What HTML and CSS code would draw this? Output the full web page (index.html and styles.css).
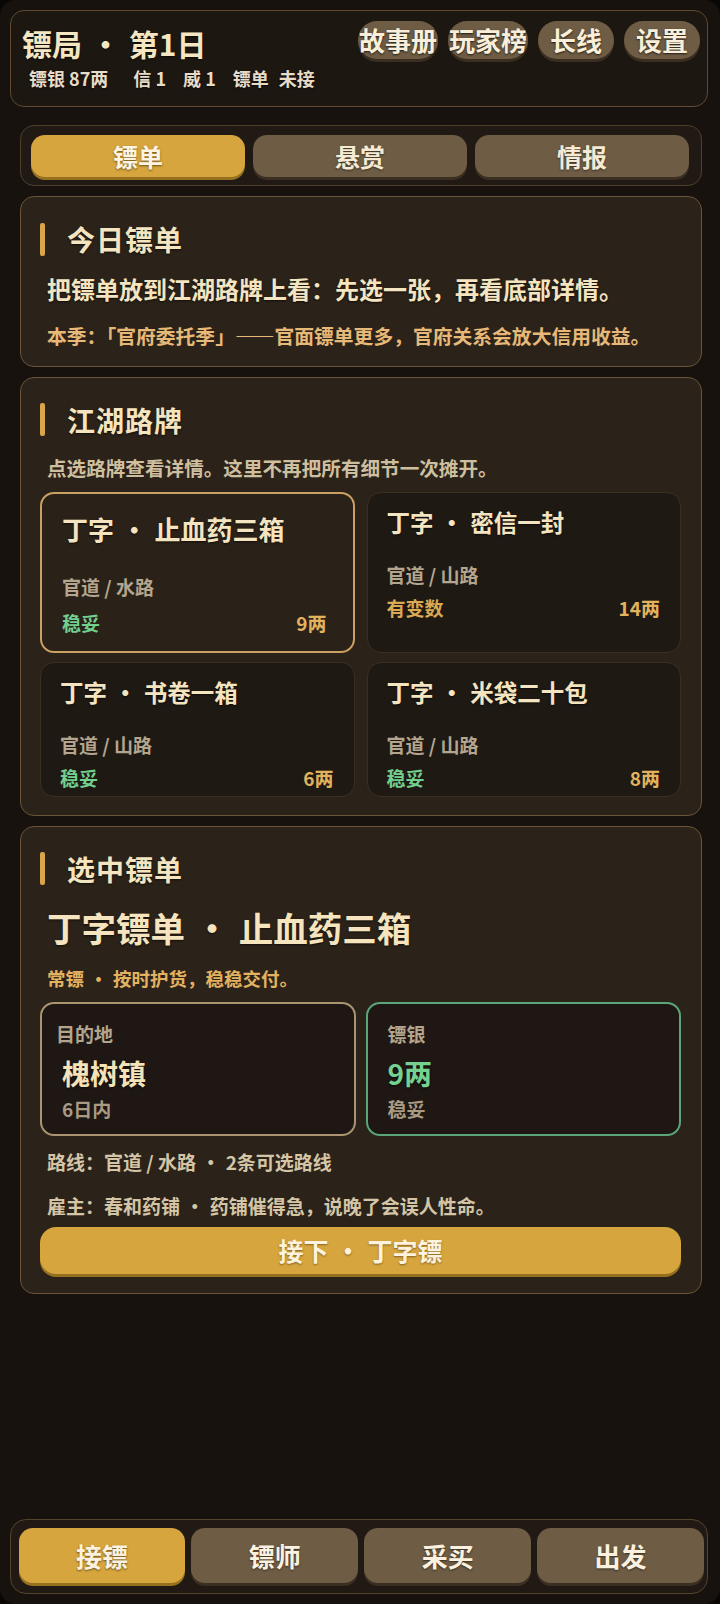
FILE: index.html
```html
<!DOCTYPE html>
<html lang="zh-CN">
<head>
<meta charset="utf-8">
<title>镖局</title>
<link rel="stylesheet" href="styles.css">
</head>
<body>
<div class="shell">
  <header class="header">
    <div class="head-left">
      <div class="head-title">镖局<span class="dot">·</span>第1日</div>
      <div class="stats">
        <span class="first">镖银 87两</span>
        <span>信 1</span>
        <span>威 1</span>
        <span class="last">镖单 未接</span>
      </div>
    </div>
    <div class="pills">
      <div class="pill wide">故事册</div>
      <div class="pill wide">玩家榜</div>
      <div class="pill">长线</div>
      <div class="pill">设置</div>
    </div>
  </header>

  <main class="main">
    <nav class="tabs">
      <div class="tab active">镖单</div>
      <div class="tab">悬赏</div>
      <div class="tab">情报</div>
    </nav>

    <section class="card card-today">
      <h2 class="sec-title">今日镖单</h2>
      <p class="lead">把镖单放到江湖路牌上看：先选一张，再看底部详情。</p>
      <p class="season">本季：「官府委托季」——官面镖单更多，官府关系会放大信用收益。</p>
    </section>

    <section class="card">
      <h2 class="sec-title">江湖路牌</h2>
      <p class="hint">点选路牌查看详情。这里不再把所有细节一次摊开。</p>
      <div class="signs">
        <div class="sign selected">
          <div class="sign-title">丁字<span class="dot">·</span>止血药三箱</div>
          <div class="sign-route">官道 / 水路</div>
          <div class="sign-foot"><span class="safe">稳妥</span><span class="price">9两</span></div>
        </div>
        <div class="sign">
          <div class="sign-title">丁字<span class="dot">·</span>密信一封</div>
          <div class="sign-route">官道 / 山路</div>
          <div class="sign-foot"><span class="risky">有变数</span><span class="price">14两</span></div>
        </div>
        <div class="sign">
          <div class="sign-title">丁字<span class="dot">·</span>书卷一箱</div>
          <div class="sign-route">官道 / 山路</div>
          <div class="sign-foot"><span class="safe">稳妥</span><span class="price">6两</span></div>
        </div>
        <div class="sign">
          <div class="sign-title">丁字<span class="dot">·</span>米袋二十包</div>
          <div class="sign-route">官道 / 山路</div>
          <div class="sign-foot"><span class="safe">稳妥</span><span class="price">8两</span></div>
        </div>
      </div>
    </section>

    <section class="card card-detail">
      <h2 class="sec-title">选中镖单</h2>
      <div class="big-title">丁字镖单<span class="dot">·</span>止血药三箱</div>
      <p class="kind">常镖<span class="dot">·</span>按时护货，稳稳交付。</p>
      <div class="boxes">
        <div class="box">
          <div class="box-label shift">目的地</div>
          <div class="box-value">槐树镇</div>
          <div class="box-sub">6日内</div>
        </div>
        <div class="box green">
          <div class="box-label">镖银</div>
          <div class="box-value money">9两</div>
          <div class="box-sub">稳妥</div>
        </div>
      </div>
      <p class="info route">路线：官道 / 水路<span class="dot">·</span>2条可选路线</p>
      <p class="info employer">雇主：春和药铺<span class="dot">·</span>药铺催得急，说晚了会误人性命。</p>
      <div class="accept">接下<span class="dot">·</span>丁字镖</div>
    </section>
  </main>

  <nav class="bottom-nav">
    <div class="nav-btn active">接镖</div>
    <div class="nav-btn">镖师</div>
    <div class="nav-btn">采买</div>
    <div class="nav-btn">出发</div>
  </nav>
</div>
</body>
</html>
```

FILE: styles.css
```css
* { box-sizing: border-box; }
html, body { margin: 0; padding: 0; }
body {
  background: #0a0806;
  font-family: "Noto Sans CJK SC", "Noto Sans", sans-serif;
  font-weight: 700;
  color: #f4e4c0;
}
p, h2 { margin: 0; }

.shell {
  min-height: 100vh;
  background: #17120e;
  border-radius: 16px;
  padding: 10px 12px 10px 10px;
  display: flex;
  flex-direction: column;
}

.dot { margin: 0 0.28em; }

/* header */
.header {
  border: 1.5px solid #5e4b30;
  border-radius: 14px;
  background: #1d1712;
  padding: 10px 7px 17px 11px;
  display: flex;
  justify-content: space-between;
  align-items: flex-start;
}
.head-left { padding-top: 4px; }
.head-title {
  font-size: 30px;
  line-height: 36px;
  color: #f5e6c2;
  text-shadow: 0 1px 2px rgba(0,0,0,.6);
}
.stats {
  margin-top: 6px;
  padding-left: 7px;
  display: flex;
  gap: 17px;
  font-size: 18px;
  line-height: 22px;
  color: #e6dcc8;
  text-shadow: 0 1px 2px rgba(0,0,0,.6);
}
.stats .first { margin-right: 8px; }
.stats .last { word-spacing: 6px; }
.pills { display: flex; gap: 10px; }
.pill {
  height: 38px;
  line-height: 38px;
  border-radius: 19px;
  background: #6e5c44;
  color: #f8eed9;
  font-size: 26px;
  padding: 0 12px;
  white-space: nowrap;
  box-shadow: 0 3px 0 #3a2e20;
  text-shadow: 0 1px 2px rgba(0,0,0,.7);
}
.pill.wide { padding: 0 1px; }

/* main */
.main {
  padding: 18px 6px 0 10px;
  display: flex;
  flex-direction: column;
  gap: 10px;
}

.tabs {
  border: 1.5px solid #4f3f2a;
  border-radius: 14px;
  background: #211a14;
  padding: 8.5px 12px 8.5px 10px;
  display: grid;
  grid-template-columns: 1fr 1fr 1fr;
  gap: 8px;
}
.tab {
  height: 42px;
  line-height: 42px;
  text-align: center;
  border-radius: 14px;
  background: #6e5c45;
  color: #f6ead4;
  font-size: 25px;
  box-shadow: 0 3px 0 #3b2f22;
  text-shadow: 0 1px 2px rgba(0,0,0,.5);
}
.tab.active { background: #d6a53d; box-shadow: 0 3px 0 #94701f; color: #fff4df; }

.card {
  border: 1.5px solid #6a5636;
  border-radius: 14px;
  background: #2b2219;
  padding: 25px 20px 16px 19px;
}
.card-today { padding-bottom: 17.5px; }
.sec-title {
  display: flex;
  align-items: center;
  font-size: 28px;
  line-height: 34px;
  font-weight: 700;
  letter-spacing: 1px;
  color: #f4e4c0;
  text-shadow: 0 1px 2px rgba(0,0,0,.6);
}
.sec-title::before {
  content: "";
  width: 5px;
  height: 33px;
  border-radius: 2px;
  background: #d9a54a;
  margin-right: 22px;
}
.lead {
  margin-top: 19px;
  padding-left: 7px;
  font-size: 24px;
  line-height: 28px;
  color: #f4e4c0;
  text-shadow: 0 1px 2px rgba(0,0,0,.6);
}
.season {
  margin-top: 21px;
  padding-left: 7px;
  font-size: 19.8px;
  line-height: 24px;
  color: #e7b978;
}
.hint {
  margin-top: 19px;
  padding-left: 7px;
  font-size: 19.6px;
  line-height: 24px;
  color: #cdbf9f;
}

.signs {
  margin-top: 12.5px;
  display: grid;
  grid-template-columns: 1fr 1fr;
  gap: 9px 12px;
  padding-bottom: 1.5px;
}
.sign {
  border: 1px solid #3b2f22;
  border-radius: 14px;
  background: #1f1914;
  padding: 14px 20px 6px 19px;
}
.sign-title {
  font-size: 23.5px;
  line-height: 30px;
  min-height: 52px;
  color: #f4e4c0;
  white-space: nowrap;
  text-shadow: 0 1px 2px rgba(0,0,0,.6);
}
.sign-route {
  margin-top: 4px;
  font-size: 19px;
  line-height: 24px;
  color: #b4a68e;
}
.sign-foot {
  margin-top: 9px;
  display: flex;
  justify-content: space-between;
  font-size: 19px;
  line-height: 24px;
}
.safe { color: #72cf8e; }
.risky { color: #d9a955; }
.price { color: #e2b35c; }
.sign.selected {
  border: 2px solid #caa163;
  background: #2a2118;
  padding: 19px 26px 16px 20px;
}
.sign.selected .sign-title { font-size: 26px; line-height: 32px; min-height: 58px; }
.sign.selected .sign-foot { margin-top: 12px; }

.card-detail { padding-bottom: 19px; }
.big-title {
  margin-top: 20px;
  padding-left: 7px;
  font-size: 34.5px;
  line-height: 42px;
  color: #f5e4bd;
  text-shadow: 0 1px 2px rgba(0,0,0,.6);
}
.kind {
  margin-top: 18px;
  padding-left: 7px;
  font-size: 18.5px;
  line-height: 24px;
  color: #e2b261;
}
.boxes {
  margin-top: 12px;
  display: grid;
  grid-template-columns: 1fr 1fr;
  gap: 10px;
}
.box {
  border: 2px solid #ab9470;
  border-radius: 14px;
  background: #1e1713;
  padding: 18px 20px 12px 20px;
  height: 134px;
}
.box.green { border-color: #5aa57a; }
.box-label {
  font-size: 19px;
  line-height: 24px;
  color: #b3a58d;
}
.box-label.shift { margin-left: -6px; }
.box-value {
  margin-top: 10px;
  font-size: 28px;
  line-height: 34px;
  color: #f4e2b8;
  text-shadow: 0 1px 2px rgba(0,0,0,.6);
}
.box-value.money { color: #74d190; }
.box-sub {
  margin-top: 7px;
  font-size: 19px;
  line-height: 24px;
  color: #a99b83;
}
.info {
  padding-left: 7px;
  font-size: 19px;
  line-height: 24px;
  color: #d4c5a7;
}
.info.route { margin-top: 14px; }
.info.employer { margin-top: 20px; }
.accept {
  margin-top: 9px;
  height: 47px;
  line-height: 47px;
  border-radius: 16px;
  background: #d6a53d;
  box-shadow: 0 3px 0 #94701f;
  text-align: center;
  font-size: 25px;
  color: #fff2dc;
  text-shadow: 0 1px 2px rgba(0,0,0,.4);
}

/* bottom nav */
.bottom-nav {
  margin-top: auto;
  border: 1.5px solid #55442d;
  border-radius: 16px;
  background: #211a14;
  padding: 7.5px 3px 10.5px 7.5px;
  display: grid;
  grid-template-columns: repeat(4, 1fr);
  gap: 6px;
}
.nav-btn {
  height: 55px;
  line-height: 55px;
  border-radius: 14px;
  text-align: center;
  font-size: 26px;
  background: #6e5c45;
  color: #fbf1de;
  box-shadow: 0 3px 0 #3b2f22;
  text-shadow: 0 1px 2px rgba(0,0,0,.5);
}
.nav-btn.active { background: #d6a53d; box-shadow: 0 3px 0 #94701f; }
```
